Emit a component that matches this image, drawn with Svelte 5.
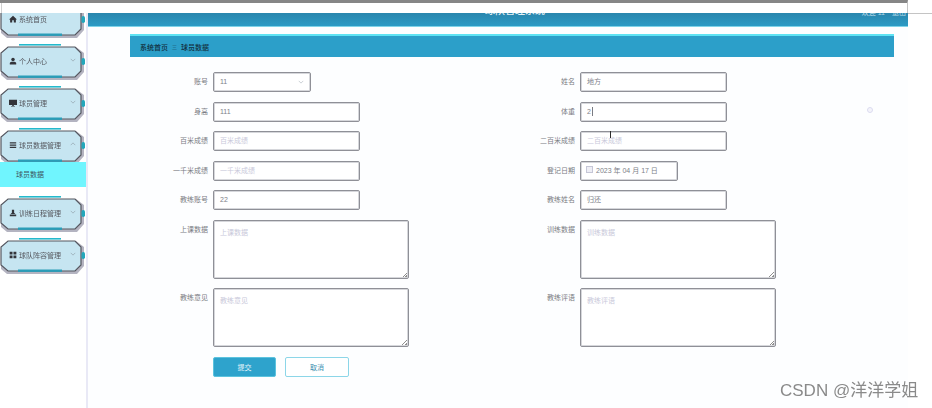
<script lang="ts">
  const left = [
    { label: '身高', value: '111' },
    { label: '百米成绩', placeholder: '百米成绩' },
    { label: '一千米成绩', placeholder: '一千米成绩' },
    { label: '教练账号', value: '22' },
  ]
  const menu = [
    { name: '个人中心', icon: 'user' },
    { name: '球员管理', icon: 'screen' },
    { name: '球员数据管理', icon: 'list', open: true },
    { name: '训练日程管理', icon: 'stamp' },
    { name: '球队阵容管理', icon: 'grid' },
  ]
</script>

{#snippet frame()}
  <svg class="frame" viewBox="0 0 86 40" aria-hidden="true">
    <rect x="19" y="0" width="42" height="1.6" fill="#25b9cc" />
    <path d="M76 3L84 9V28L77 36H7L1 31V9L8 3Z" fill="#b4b4c1" />
    <path d="M8 3H75L81 9V27L75 33H8L1 27V9Z" fill="#c6e5f1" />
    <path d="M8 3H75L81 9V27L75 33H8L1 27V9Z" fill="none" stroke="#55565f" stroke-width="1.2" />
    <rect x="18" y="31.5" width="44" height="2.4" fill="#2a9db8" />
    <rect x="81.5" y="14" width="3.5" height="7" rx="1.7" fill="#23a7bb" />
  </svg>
{/snippet}

{#snippet icon(kind: string)}
  <svg class="icon" viewBox="0 0 10 10" aria-hidden="true">
    {#if kind === 'home'}
      <path d="M5 1L10 5.6H8.6V9.5H6V6.5H4V9.5H1.4V5.6H0Z" fill="#33343a" />
    {:else if kind === 'user'}
      <circle cx="5" cy="3" r="2.2" fill="#33343a" /><path d="M1 9.5V7.6C1 6.4 3 5.8 5 5.8S9 6.4 9 7.6V9.5Z" fill="#33343a" />
    {:else if kind === 'screen'}
      <path d="M0 1H10V7.5H6V8.6H7.5V9.4H2.5V8.6H4V7.5H0Z" fill="#33343a" />
    {:else if kind === 'list'}
      <path d="M1 1.5H9V3H1ZM1 4.3H9V5.8H1ZM1 7.1H9V8.6H1Z" fill="#33343a" />
    {:else if kind === 'stamp'}
      <path d="M3.6 1H6.4V4.6L8 6.4H2L3.6 4.6ZM1 7H9V9H1Z" fill="#33343a" />
    {:else}
      <path d="M.8.8H4.4V4.4H.8ZM5.6.8H9.2V4.4H5.6ZM.8 5.6H4.4V9.2H.8ZM5.6 5.6H9.2V9.2H5.6Z" fill="#33343a" />
    {/if}
  </svg>
{/snippet}

<div class="page">
  <div class="shot">
    <div class="browser-top"></div>
    <div class="layout">
      <aside class="sidebar">
        <div class="item first">
          {@render frame()}
          <div class="item-row">{@render icon('home')}<span>系统首页</span></div>
        </div>
        {#each menu as m}
          <div class="item">
            {@render frame()}
            <div class="item-row">
              {@render icon(m.icon)}<span>{m.name}</span>
              <svg class="chev" viewBox="0 0 8 5" aria-hidden="true">
                <path d={m.open ? 'M1 4L4 1L7 4' : 'M1 1L4 4L7 1'} fill="none" stroke="#8b98a3" stroke-width=".8" />
              </svg>
            </div>
          </div>
          {#if m.open}
            <div class="sub">球员数据</div>
          {/if}
        {/each}
      </aside>

      <main class="main">
        <header class="header">
          <span class="title">球队管理系统</span>
          <span class="user">欢迎 11　退出</span>
        </header>
        <div class="content">
          <div class="crumb"><b>系统首页</b><i>三</i><b>球员数据</b></div>
          <div class="form">
            <div class="col">
              <div class="row">
                <label>账号</label>
                <div class="input select">11
                  <svg class="chev" viewBox="0 0 8 5" aria-hidden="true"><path d="M1 1L4 4L7 1" fill="none" stroke="#a9b2bb" stroke-width=".8" /></svg>
                </div>
              </div>
              {#each left as f}
                <div class="row">
                  <label>{f.label}</label>
                  <div class="input" class:ph={f.placeholder}>{f.value ?? f.placeholder}</div>
                </div>
              {/each}
              <div class="row tall">
                <label>上课数据</label>
                <div class="input area ph">上课数据</div>
              </div>
              <div class="row tall">
                <label>教练意见</label>
                <div class="input area ph">教练意见</div>
              </div>
              <div class="row btns">
                <button class="submit">提交</button>
                <button class="cancel">取消</button>
              </div>
            </div>

            <div class="col">
              <div class="row">
                <label>姓名</label>
                <div class="input">地方</div>
              </div>
              <div class="row">
                <label>体重</label>
                <div class="input">2<span class="caret"></span></div>
              </div>
              <div class="row">
                <label>二百米成绩</label>
                <div class="input ph">二百米成绩<span class="beam"></span></div>
              </div>
              <div class="row">
                <label>登记日期</label>
                <div class="input date"><span class="cal"></span>2023 年 04 月 17 日</div>
              </div>
              <div class="row">
                <label>教练姓名</label>
                <div class="input">归还</div>
              </div>
              <div class="row tall">
                <label>训练数据</label>
                <div class="input area ph">训练数据</div>
              </div>
              <div class="row tall">
                <label>教练评语</label>
                <div class="input area ph">教练评语</div>
              </div>
            </div>
            <span class="dot"></span>
          </div>
        </div>
      </main>
    </div>
  </div>
  <span class="mark">CSDN @洋洋学姐</span>
</div>

<style>
  :global(body) {
    background: #fff;
  }

  .page {
    position: relative;
    width: 932px;
    height: 408px;
    overflow: hidden;
    background: #fff;
    font-family: 'Liberation Sans', 'Noto Sans CJK SC', sans-serif;
    font-size: 7px;
  }

  .shot {
    filter: blur(0.5px);
  }

  .browser-top {
    position: relative;
    width: 908px;
    height: 13px;
    box-sizing: border-box;
    border-top: 3px solid #868686;
    border-right: 1px solid #c4c4c4;
  }

  .browser-top::before {
    content: '';
    position: absolute;
    left: 1px;
    top: 0;
    width: 1px;
    height: 10px;
    background: #d0d0d0;
  }

  .browser-top::after {
    content: '';
    position: absolute;
    left: 908px;
    top: 10px;
    width: 24px;
    height: 1px;
    background: #c4c4c4;
  }

  .layout {
    display: flex;
    width: 908px;
    height: 395px;
  }

  .sidebar {
    width: 88px;
    flex: none;
    overflow: hidden;
    box-sizing: border-box;
    border-right: 2px solid #e9e9f6;
    color: #56585f;
  }

  .item {
    position: relative;
    height: 42px;
  }

  .first {
    margin-top: -11px;
  }

  .frame {
    position: absolute;
    left: 0;
    top: 0;
    width: 86px;
    height: 40px;
  }

  .item-row {
    position: relative;
    display: flex;
    align-items: center;
    height: 34px;
    padding-left: 9px;
    gap: 2px;
  }

  .icon {
    width: 8px;
    height: 8px;
    flex: none;
  }

  .item-row .chev {
    position: absolute;
    left: 70px;
    top: 14px;
  }

  .chev {
    width: 6px;
    height: 4px;
  }

  .sub {
    position: relative;
    height: 25px;
    line-height: 25px;
    margin: -8px 0 9px;
    padding-left: 16px;
    background: #70f5fe;
    color: #3d5560;
  }

  .main {
    flex: 1;
    min-width: 0;
  }

  .header {
    position: relative;
    height: 14px;
    overflow: hidden;
    background: linear-gradient(#2a86ad, #2c9bc5);
    border-bottom: 1px solid #7fd3e8;
    box-sizing: border-box;
    color: #e6f2f7;
  }

  .title {
    position: absolute;
    left: 397px;
    top: -9px;
    font-size: 10px;
    line-height: 14px;
    font-weight: 500;
  }

  .user {
    position: absolute;
    right: 2px;
    top: -7px;
    line-height: 14px;
    color: #b6dbe9;
  }

  .content {
    padding: 7px 14px 0 42px;
    background: #fdfeff;
    height: 381px;
  }

  .crumb {
    display: flex;
    align-items: center;
    gap: 4px;
    box-sizing: border-box;
    height: 23px;
    padding-left: 10px;
    background: #2c9fc9;
    border-top: 2px solid #5fe3f3;
    color: #12303f;
  }

  .crumb b {
    font-weight: 500;
  }

  .crumb i {
    font-style: normal;
    font-size: 5px;
  }

  .form {
    position: relative;
    display: grid;
    grid-template-columns: 367px 1fr;
    padding-top: 15px;
  }

  .row {
    display: flex;
    gap: 5px;
    height: 20px;
    margin-bottom: 9.5px;
    color: #7a7c83;
  }

  .row label {
    width: 78px;
    text-align: right;
    line-height: 19px;
    flex: none;
  }

  .input {
    position: relative;
    width: 147px;
    height: 20px;
    box-sizing: border-box;
    padding-left: 6px;
    line-height: 18px;
    background: #fff;
    border: 1px solid #8f9097;
    box-shadow: inset 0 0 0 1px #d6d7db;
    border-radius: 2px;
    color: #7d8088;
  }

  .ph {
    color: #c9c9da;
  }

  .caret {
    display: inline-block;
    width: 1px;
    height: 9px;
    margin-left: 1px;
    vertical-align: -2px;
    background: #7a7b82;
  }

  /* mouse pointer caught in the capture */
  .beam {
    position: absolute;
    left: 29px;
    top: -1px;
    width: 1px;
    height: 7px;
    background: #2c2c2c;
  }

  .select {
    width: 98px;
  }

  .select .chev {
    position: absolute;
    right: 6px;
    top: 7px;
  }

  .date {
    width: 98px;
    padding-left: 5px;
    display: flex;
    align-items: center;
    gap: 3px;
  }

  .cal {
    width: 5px;
    height: 5px;
    margin: -3px 0 0;
    border: 1px solid #c5c6d6;
    background: #eeeef5;
  }

  .tall {
    height: 59px;
    margin-bottom: 9.5px;
  }

  .area {
    width: 196px;
    height: 59px;
    padding-top: 3px;
  }

  .area::after {
    content: '';
    position: absolute;
    right: 1px;
    bottom: 1px;
    width: 5px;
    height: 5px;
    background: linear-gradient(135deg, transparent 50%, #8e8e8e 50%, #8e8e8e 60%, transparent 60%, transparent 75%, #8e8e8e 75%);
  }

  .btns {
    padding-left: 83px;
    gap: 9px;
  }

  button {
    width: 63px;
    height: 20px;
    padding: 0;
    font: inherit;
    border-radius: 2px;
  }

  .submit {
    background: #2ea3cc;
    border: 1px solid #5cc3de;
    color: #e8f6fb;
  }

  .cancel {
    width: 64px;
    background: #fff;
    border: 1px solid #8cd6e8;
    color: #3c8fb0;
  }

  .dot {
    position: absolute;
    left: 737px;
    top: 50px;
    width: 4px;
    height: 4px;
    border: 1px solid #dcdcf0;
    border-radius: 50%;
    background: #f4f4fb;
  }

  .mark {
    position: absolute;
    left: 780px;
    top: 381px;
    font-size: 17px;
    line-height: 20px;
    color: #8a8a8a;
  }
</style>
